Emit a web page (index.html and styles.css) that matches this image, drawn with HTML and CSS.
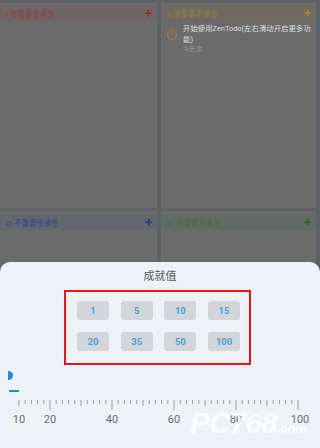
FILE: index.html
```html
<!DOCTYPE html>
<html>
<head>
<meta charset="utf-8">
<link rel="stylesheet" href="styles.css">
</head>
<body>
<div class="screen">
  <div class="quads">
    <div class="quad">
      <div class="qhead q1"><span>I 很重要很紧急</span><span class="plus">+</span></div>
    </div>
    <div class="quad">
      <div class="qhead q2"><span>II 很重要不紧急</span><span class="plus">+</span></div>
      <div class="task">
        <span class="ring"></span>
        <div class="tbody">
          <div class="ttext">开始使用ZenTodo(左右滑动开启更多功能)</div>
          <div class="tsub">今天 添</div>
        </div>
      </div>
    </div>
    <div class="quad">
      <div class="qhead q3 low"><span>III 不重要很紧急</span><span class="plus">+</span></div>
    </div>
    <div class="quad">
      <div class="qhead q4 low"><span>IV 不重要不紧急</span><span class="plus">+</span></div>
    </div>
  </div>

  <div class="sheet">
    <div class="title">成就值</div>
    <div class="box">
      <div class="grid">
        <div class="btn">1</div>
        <div class="btn">5</div>
        <div class="btn">10</div>
        <div class="btn">15</div>
        <div class="btn">20</div>
        <div class="btn">35</div>
        <div class="btn">50</div>
        <div class="btn">100</div>
      </div>
    </div>
    <div class="knob"></div>
    <div class="dash"></div>
    <svg class="ruler" width="320" height="34" viewBox="0 0 320 34" id="ruler"></svg>
    <div class="wm">PC768<span>.com</span></div>
  </div>
</div>
<script>
(function(){
  var svg = document.getElementById('ruler');
  var ns = 'http://www.w3.org/2000/svg';
  for (var v = 10; v <= 100; v += 2) {
    var x = 19 + (v - 10) * 3.1;
    var h = (v % 20 === 0) ? 10 : (v % 10 === 0 ? 6 : 4);
    var l = document.createElementNS(ns, 'line');
    l.setAttribute('x1', x); l.setAttribute('x2', x);
    l.setAttribute('y1', 0); l.setAttribute('y2', h);
    l.setAttribute('stroke', '#9a9ea3');
    l.setAttribute('stroke-width', '1');
    svg.appendChild(l);
  }
  var labels = [10,20,40,60,80,100];
  labels.forEach(function(v){
    var x = 19 + (v - 10) * 3.1;
    var t = document.createElementNS(ns, 'text');
    t.setAttribute('x', v === 100 ? x + 2 : x);
    t.setAttribute('y', 23);
    t.setAttribute('text-anchor', 'middle');
    t.setAttribute('class', 'rlabel');
    t.textContent = v;
    svg.appendChild(t);
  });
})();
</script>
</body>
</html>
```

FILE: styles.css
```css
html, body {
  margin: 0;
  padding: 0;
}
body {
  width: 320px;
  height: 448px;
  overflow: hidden;
  font-family: Roboto, "Noto Sans CJK SC", sans-serif;
}
.screen {
  position: relative;
  width: 320px;
  height: 448px;
  background: #5c6166;
  overflow: hidden;
}
.quads {
  display: grid;
  grid-template-columns: 157px 155px;
  grid-template-rows: 205px 240px;
  column-gap: 4px;
  row-gap: 3px;
  padding-top: 3px;
}
.quad {
  background: #6b6b6b;
}
.qhead {
  height: 16px;
  display: flex;
  align-items: center;
  justify-content: space-between;
  padding: 0 5px 0 6px;
  font-size: 7.5px;
  margin-top: 2px;
}
.qhead.low {
  margin-top: 3px;
}
.qhead .plus {
  font-size: 13px;
  font-weight: bold;
  line-height: 1;
}
.q1 { background: #6f6566; color: #8c3f3f; }
.q1 .plus { color: #9a2a2a; }
.q2 { background: #6e6a62; color: #93803e; }
.q2 .plus { color: #a08a25; }
.q3 { background: #63666f; color: #3b4882; }
.q3 .plus { color: #283a86; }
.q4 { background: #636a64; color: #3e6b48; }
.q4 .plus { color: #245e33; }
.task {
  display: flex;
  align-items: flex-start;
  padding: 2px 2px 0 6px;
}
.ring {
  box-sizing: border-box;
  width: 10px;
  height: 10px;
  border: 1.6px solid #a8872c;
  border-radius: 50%;
  margin-top: 7px;
  flex: none;
}
.tbody {
  margin-left: 6px;
}
.ttext {
  font-size: 7.4px;
  line-height: 11px;
  color: #dedede;
}
.tsub {
  font-size: 6px;
  line-height: 8px;
  color: #9a9a9a;
}
.sheet {
  position: absolute;
  left: 0;
  top: 262px;
  width: 320px;
  height: 186px;
  background: #eef2f6;
  border-radius: 10px 10px 0 0;
  display: flex;
  flex-direction: column;
  align-items: flex-start;
}
.title {
  align-self: center;
  margin-top: 7px;
  font-size: 11px;
  line-height: 16px;
  color: #555a60;
}
.box {
  align-self: flex-start;
  margin-left: 64px;
  margin-top: 5px;
  width: 183px;
  height: 71px;
  border: 2px solid #e8161a;
  box-sizing: content-box;
}
.grid {
  display: grid;
  grid-template-columns: repeat(4, 32px);
  column-gap: 11.7px;
  row-gap: 12px;
  padding: 9px 0 0 11px;
}
.btn {
  height: 19px;
  border-radius: 3px;
  background: #d2d6da;
  color: #4a9ed8;
  font-size: 9.5px;
  font-weight: bold;
  display: flex;
  align-items: center;
  justify-content: center;
}
.knob {
  margin-top: 6px;
  margin-left: 8px;
  width: 5px;
  height: 9px;
  background: #2688d6;
  border-radius: 0 5px 5px 0;
}
.dash {
  margin-top: 10px;
  margin-left: 9px;
  width: 10px;
  height: 2px;
  background: #2688d6;
}
.ruler {
  display: block;
  margin-top: 8px;
}
.rlabel {
  font-family: Roboto, sans-serif;
  font-size: 11px;
  fill: #6a6e73;
}
.wm {
  position: absolute;
  left: 190px;
  top: 146px;
  font-family: "Liberation Sans", sans-serif;
  font-weight: bold;
  font-style: italic;
  font-size: 30px;
  line-height: 30px;
  color: rgba(255,255,255,0.8);
  letter-spacing: -1px;
}
.wm span {
  font-size: 13px;
  font-style: normal;
  letter-spacing: 0;
}
```
